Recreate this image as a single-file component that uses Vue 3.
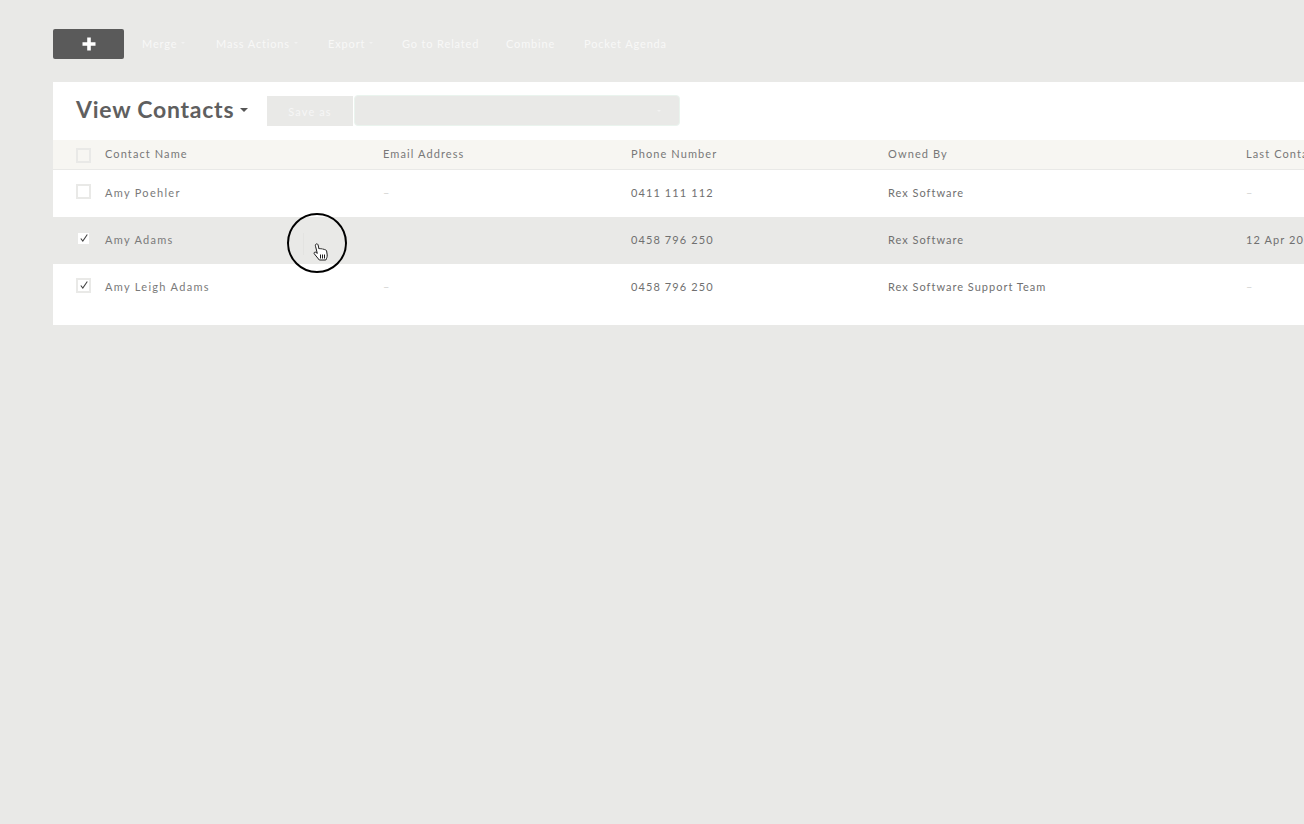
<script setup>
const menu = [
  { label: 'Merge', caret: true, w: 74 },
  { label: 'Mass Actions', caret: true, w: 112 },
  { label: 'Export', caret: true, w: 74 },
  { label: 'Go to Related', caret: false, w: 104 },
  { label: 'Combine', caret: false, w: 78 },
  { label: 'Pocket Agenda', caret: false, w: 90 },
]
const rows = [
  { name: 'Amy Poehler', email: '–', phone: '0411 111 112', owner: 'Rex Software', last: '–', checked: false, active: false },
  { name: 'Amy Adams', email: '', phone: '0458 796 250', owner: 'Rex Software', last: '12 Apr 2017', checked: true, active: true },
  { name: 'Amy Leigh Adams', email: '–', phone: '0458 796 250', owner: 'Rex Software Support Team', last: '–', checked: true, active: false },
]
</script>

<template>
  <div class="page">
    <div class="toolbar">
      <button class="add" type="button" aria-label="Add">
        <svg width="16" height="16" viewBox="0 0 16 16"><path d="M6.200 1.500h3.600v4.700h4.700v3.600H9.800v4.700H6.200V9.800H1.500V6.200h4.700z" fill="#fff"/></svg>
      </button>
      <nav class="menu">
        <span v-for="m in menu" :key="m.label" class="menu-item" :style="{ width: m.w + 'px' }">
          {{ m.label }}<i v-if="m.caret" class="mini-caret"></i>
        </span>
      </nav>
    </div>

    <section class="card">
      <header class="head">
        <h1 class="title">View Contacts</h1>
        <i class="title-caret"></i>
        <button class="save" type="button">Save as</button>
        <div class="select"><i class="mini-caret"></i></div>
      </header>

      <div class="row row-head">
        <span class="box box-head"></span>
        <span>Contact Name</span>
        <span>Email Address</span>
        <span>Phone Number</span>
        <span>Owned By</span>
        <span>Last Contacted</span>
      </div>

      <div v-for="r in rows" :key="r.name" class="row row-body" :class="{ active: r.active }">
        <span class="box">
          <svg v-if="r.checked" width="10" height="10" viewBox="0 0 10 10"><path d="M1.800 5.500 3.800 8 8.300 1.500" fill="none" stroke="#444" stroke-width="1.100"/></svg>
        </span>
        <span class="name">{{ r.name }}</span>
        <span class="muted">{{ r.email }}</span>
        <span>{{ r.phone }}</span>
        <span class="owner">{{ r.owner }}</span>
        <span class="last" :class="{ muted: r.last === '–' }">{{ r.last }}</span>
      </div>
      <div class="card-foot"></div>
    </section>

    <div class="cursor">
      <i class="cursor-line"></i>
      <svg class="hand" width="16" height="18" viewBox="0 0 16 18">
        <path d="M2.600 1.500c.6-.9 2-.8 2.400.2l1 4.300c.5-.6 1.500-.6 2 .1.500-.6 1.600-.5 2 .3.600-.4 1.600-.2 1.900.5.700-.2 1.500.2 1.700 1l.6 4c.1 2-.5 3.400-1.400 5.100H6.300L1.200 10.700c-.6-1 .6-2.100 1.700-1.400l1.400 1.100L2.500 3.200c-.2-.6-.2-1.200.1-1.700z" fill="#fff" stroke="#1c1c1c" stroke-width="1"/>
        <path d="M7.500 11.500v4M9.500 11.500v4M11.500 11.500v4" stroke="#1c1c1c" stroke-width="1" fill="none"/>
      </svg>
    </div>
  </div>
</template>

<style>
html, body { margin: 0; background: #e9e9e7; overflow: hidden; }
</style>

<style scoped>
.page {
  position: relative;
  width: 1304px;
  height: 824px;
  overflow: hidden;
  background: #e9e9e7;
  font-family: Lato, "Open Sans", sans-serif;
  font-size: 11px;
  line-height: 13px;
  letter-spacing: 1.1px;
  color: #707070;
  padding: 29px 0 0 53px;
  box-sizing: border-box;
}
.toolbar {
  display: flex;
  align-items: center;
  height: 30px;
}
.add {
  width: 71px;
  height: 30px;
  background: #5a5a5a;
  border: 0;
  border-radius: 2px;
  padding: 0;
  display: flex;
  align-items: center;
  justify-content: center;
}
.menu {
  display: flex;
  margin-left: 18px;
  margin-top: -2px;
  color: #f8f8f7;
  letter-spacing: 0.85px;
}
.menu-item {
  display: flex;
  align-items: center;
  white-space: nowrap;
}
.mini-caret {
  display: inline-block;
  margin-left: 4px;
  border-left: 2px solid transparent;
  border-right: 2px solid transparent;
  border-top: 2px solid #f2f2f1;
}
.card {
  margin-top: 23px;
  width: 1300px;
  height: 243px;
  background: #fff;
}
.head {
  display: flex;
  align-items: center;
  height: 58px;
  padding-left: 23px;
  box-sizing: border-box;
}
.title {
  margin: -4px 0 0;
  font-size: 23px;
  line-height: 28px;
  font-weight: 700;
  letter-spacing: 0.75px;
  color: #5f5f5f;
  white-space: nowrap;
  width: 158px;
}
.title-caret {
  margin: -2px 0 0 6px;
  border-left: 4px solid transparent;
  border-right: 4px solid transparent;
  border-top: 4px solid #555;
}
.save {
  margin-left: 19px;
  width: 86px;
  height: 30px;
  border: 0;
  padding: 0;
  background: #e9e9e7;
  color: #f6f6f6;
  font: inherit;
  letter-spacing: inherit;
}
.select {
  margin-left: 1px;
  margin-top: -1px;
  width: 326px;
  height: 31px;
  box-sizing: border-box;
  background: #e9e9e7;
  border: 1px solid #eaf4ee;
  border-radius: 4px;
  display: flex;
  align-items: center;
  justify-content: flex-end;
  padding-right: 18px;
}
.row {
  display: grid;
  grid-template-columns: 29px 278px 248px 257px 358px 1fr;
  align-items: center;
  padding-left: 23px;
  white-space: nowrap;
}
.row > span:not(.box) { margin-top: -2px; }
.row-head {
  height: 30px;
  background: #f7f6f2;
  border-bottom: 1px solid #e9e9e7;
  box-sizing: border-box;
  color: #787878;
}
.row-body { height: 47px; }
.row-body.active { background: #e9e9e7; }
.name { color: #7a7a7a; letter-spacing: 1.3px; }
.owner { letter-spacing: 1px; }
.row > .muted { color: #d4d4d2; }
.last { overflow: hidden; }
.box {
  width: 15px;
  height: 15px;
  box-sizing: border-box;
  border: 2px solid #e9e9e7;
  background: #fff;
  display: flex;
  align-items: center;
  justify-content: center;
  margin-top: -5px;
}
.box-head { background: #f7f6f2; margin-top: 1px; }
.card-foot { height: 14px; }
.cursor {
  position: absolute;
  left: 287px;
  top: 213px;
  width: 60px;
  height: 60px;
  box-sizing: border-box;
  border: 2.500px solid #000;
  border-radius: 50%;
}
.cursor-line {
  position: absolute;
  left: 13.500px;
  top: 17.500px;
  width: 1px;
  height: 22px;
  background: #e3e3e1;
}
.hand {
  position: absolute;
  left: 23.500px;
  top: 27.500px;
}
</style>
